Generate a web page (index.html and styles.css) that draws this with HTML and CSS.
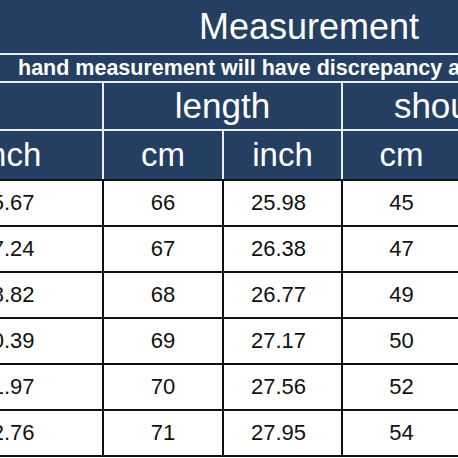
FILE: index.html
```html
<!DOCTYPE html>
<html>
<head>
<meta charset="utf-8">
<link rel="stylesheet" href="styles.css">
</head>
<body>
<div class="frame">
  <table class="size-table">
    <colgroup>
      <col class="c-chest-cm">
      <col class="c-chest-in">
      <col class="c-len-cm">
      <col class="c-len-in">
      <col class="c-sh-cm">
      <col class="c-sh-in">
    </colgroup>
    <thead>
      <tr class="r-title"><th colspan="6" class="title">Measurement</th></tr>
      <tr class="r-note"><th colspan="6" class="note">hand measurement will have discrepancy about 1-3cm</th></tr>
      <tr class="r-group">
        <th colspan="2">chest</th>
        <th colspan="2">length</th>
        <th colspan="2">shoulder</th>
      </tr>
      <tr class="r-unit">
        <th>cm</th><th class="first">inch</th>
        <th>cm</th><th>inch</th>
        <th>cm</th><th>inch</th>
      </tr>
    </thead>
    <tbody>
      <tr><td>116</td><td class="first">45.67</td><td>66</td><td class="inch">25.98</td><td>45</td><td>17.72</td></tr>
      <tr><td>120</td><td class="first">47.24</td><td>67</td><td class="inch">26.38</td><td>47</td><td>18.50</td></tr>
      <tr><td>124</td><td class="first">48.82</td><td>68</td><td class="inch">26.77</td><td>49</td><td>19.29</td></tr>
      <tr><td>128</td><td class="first">50.39</td><td>69</td><td class="inch">27.17</td><td>50</td><td>19.69</td></tr>
      <tr><td>132</td><td class="first">51.97</td><td>70</td><td class="inch">27.56</td><td>52</td><td>20.47</td></tr>
      <tr><td>134</td><td class="first">52.76</td><td>71</td><td class="inch">27.95</td><td>54</td><td>21.26</td></tr>
    </tbody>
  </table>
</div>
</body>
</html>
```
FILE: styles.css
```css
html, body {
  margin: 0;
  padding: 0;
  background: #ffffff;
}
.frame {
  width: 458px;
  height: 458px;
  overflow: hidden;
}
.size-table {
  margin-left: -202px;
  width: 781px;
  table-layout: fixed;
  border-collapse: collapse;
  font-family: "Liberation Sans", Arial, sans-serif;
}
.c-chest-cm { width: 120px; }
.c-chest-in { width: 184px; }
.c-len-cm { width: 120px; }
.c-len-in { width: 119px; }
.c-sh-cm { width: 119px; }
.c-sh-in { width: 119px; }

.size-table th {
  background: #253f63;
  color: #ffffff;
  font-weight: normal;
  border: 2px solid #e9edf2;
  padding: 0;
  white-space: nowrap;
  overflow: hidden;
}
.r-title th {
  height: 53px;
  border-top: none;
  font-size: 36px;
  text-align: left;
  padding-left: 399px;
}
.r-note th {
  height: 26px;
  font-size: 21.5px;
  font-weight: bold;
  text-align: left;
  padding-left: 218px;
}
.r-group th {
  height: 46px;
  font-size: 35px;
  text-align: center;
}
.r-unit th {
  height: 48px;
  font-size: 33px;
  text-align: center;
  border-bottom: 2px solid #111111;
}
.size-table td {
  height: 44px;
  padding: 0;
  border: 2px solid #111111;
  text-align: center;
  font-size: 22px;
  color: #111111;
  background: #ffffff;
}
.size-table td.inch {
  padding-right: 8px;
}
.size-table td.first {
  padding-right: 8px;
}
```
